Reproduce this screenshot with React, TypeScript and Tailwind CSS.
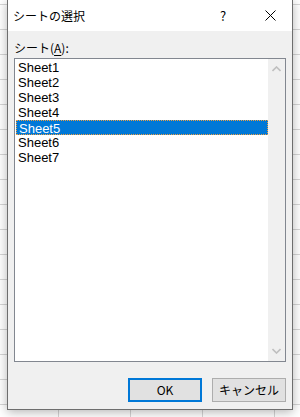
import React from 'react';

const sheets = ['Sheet1', 'Sheet2', 'Sheet3', 'Sheet4', 'Sheet5', 'Sheet6', 'Sheet7'];

const jp = "font-['Segoe_UI','Noto_Sans_CJK_JP','Liberation_Sans',sans-serif]";

const App: React.FC = () => {
  const selected = 'Sheet5';

  return (
    <div className="w-[300px] h-[417px] overflow-hidden flex pl-[7px] bg-white bg-[linear-gradient(to_right,#d6d6d6_1px,transparent_1px),linear-gradient(to_bottom,#d6d6d6_1px,transparent_1px)] bg-[size:72px_25px] bg-[position:58px_4px]">
      {/* Dialog */}
      <div className={`w-[286px] h-[410px] flex flex-col bg-[#f0f0f0] border-x border-b border-[#6e6e6e] shadow-[0_2px_10px_rgba(0,0,0,0.3)] ${jp}`}>
        {/* Title bar */}
        <div className="h-[31px] bg-white flex items-center pl-[5px] text-[12px] text-black">
          <span className="flex-1">シートの選択</span>
          <span className="w-[20px] text-center text-[13px] mr-[32px]">?</span>
          <svg width="11" height="11" viewBox="0 0 11 11" className="mr-[16px]">
            <path d="M0.5 0.5 L10.5 10.5 M10.5 0.5 L0.5 10.5" stroke="#000" strokeWidth="1" />
          </svg>
        </div>

        <div className="flex-1 flex flex-col px-[6px] pt-[9px]">
          <div className="text-[12px] leading-[15px] text-black h-[18px]">
            シート(<span className="underline underline-offset-2">A</span>):
          </div>

          {/* List box */}
          <div className="w-[272px] h-[304px] border border-[#828790] bg-white flex">
            <div className="flex-1 pt-[1px] pl-[1px] font-['Liberation_Sans',sans-serif]">
              {sheets.map((s) => {
                const isSel = s === selected;
                return (
                  <div
                    key={s}
                    className={`h-[15px] pl-[2px] text-[13px] leading-[15px] ${
                      isSel
                        ? 'bg-[#0078d7] text-white border border-dotted border-[#f0a040] pl-[1px] leading-[13px]'
                        : 'text-black'
                    }`}
                  >
                    {s}
                  </div>
                );
              })}
            </div>
            {/* Scrollbar */}
            <div className="w-[17px] bg-[#f0f0f0] flex flex-col justify-between items-center py-[7px]">
              <svg width="9" height="6" viewBox="0 0 9 6">
                <path d="M0.5 5 L4.5 1 L8.5 5" stroke="#bfbfbf" strokeWidth="1.6" fill="none" />
              </svg>
              <svg width="9" height="6" viewBox="0 0 9 6">
                <path d="M0.5 1 L4.5 5 L8.5 1" stroke="#bfbfbf" strokeWidth="1.6" fill="none" />
              </svg>
            </div>
          </div>

          {/* Buttons */}
          <div className="flex justify-end gap-[10px] mt-[16px]">
            <button className="w-[74px] h-[24px] bg-[#e1e1e1] border-2 border-[#0078d7] text-[12px] text-black">
              OK
            </button>
            <button className="w-[74px] h-[24px] bg-[#e1e1e1] border border-[#adadad] text-[12px] text-black">
              キャンセル
            </button>
          </div>
        </div>
      </div>
    </div>
  );
};

export default App;
